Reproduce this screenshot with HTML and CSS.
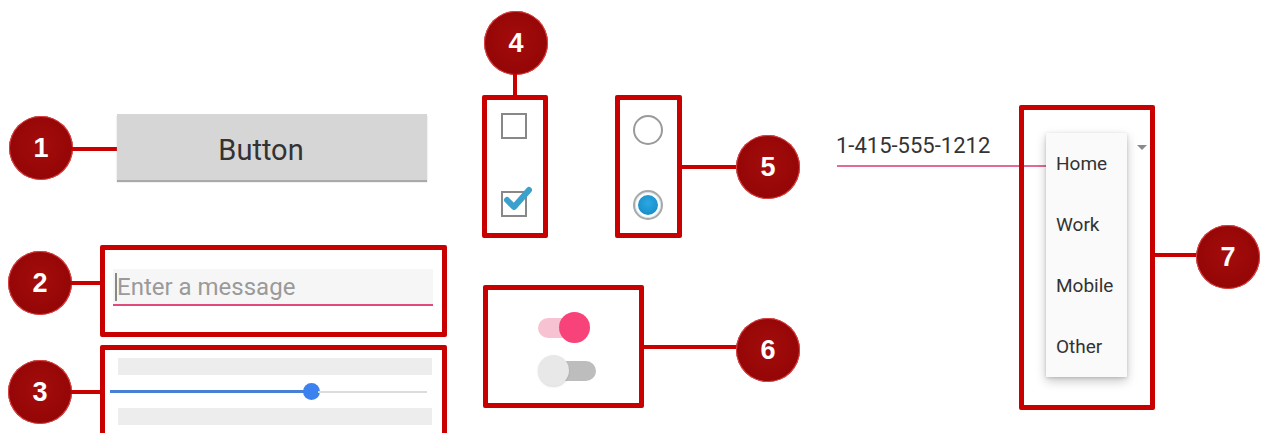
FILE: index.html
```html
<!DOCTYPE html>
<html>
<head>
<meta charset="utf-8">
<link rel="stylesheet" href="styles.css">
</head>
<body>
<div class="canvas">
  <!-- 1 button -->
  <div class="badge b1">1</div>
  <div class="hline l1"></div>
  <div class="btn">Button</div>

  <!-- 2 text field -->
  <div class="badge b2">2</div>
  <div class="hline l2"></div>
  <div class="frame f2">
    <div class="textfield"><span class="caret"></span><span class="hint">Enter a message</span></div>
  </div>

  <!-- 3 slider -->
  <div class="badge b3">3</div>
  <div class="hline l3"></div>
  <div class="frame f3">
    <div class="band"></div>
    <div class="slider">
      <div class="track-on" style="width:60.5%"></div>
      <div class="thumb"></div>
      <div class="track-off"></div>
    </div>
    <div class="band"></div>
  </div>

  <!-- 4 checkboxes -->
  <div class="badge b4">4</div>
  <div class="vline l4"></div>
  <div class="frame f4 stack">
    <div class="cbox"></div>
    <div class="cbox checked">
      <svg viewBox="0 0 30 30" width="30" height="30"><path d="M5 16 L12 23 L27 6" fill="none" stroke="#3aa0cc" stroke-width="6" stroke-linecap="round" stroke-linejoin="round"/></svg>
    </div>
  </div>

  <!-- 5 radios -->
  <div class="frame f5 stack">
    <div class="radio"></div>
    <div class="radio on"><span class="dot"></span></div>
  </div>
  <div class="hline l5"></div>
  <div class="badge b5">5</div>

  <!-- 6 switches -->
  <div class="frame f6">
    <div class="switches">
      <div class="sw sw-on"><span class="sw-track"></span><span class="sw-thumb"></span></div>
      <div class="sw sw-off"><span class="sw-track"></span><span class="sw-thumb"></span></div>
    </div>
  </div>
  <div class="hline l6"></div>
  <div class="badge b6">6</div>

  <!-- 7 spinner -->
  <div class="phone">1-415-555-1212</div>
  <div class="phone-line"></div>
  <div class="arrow"></div>
  <div class="popup">
    <div class="item">Home</div>
    <div class="item">Work</div>
    <div class="item">Mobile</div>
    <div class="item">Other</div>
  </div>
  <div class="frame f7"></div>
  <div class="hline l7"></div>
  <div class="badge b7">7</div>
</div>
</body>
</html>
```

FILE: styles.css
```css
html, body { margin: 0; padding: 0; background: #fff; }
.canvas { position: relative; width: 1263px; height: 433px; overflow: hidden; font-family: Roboto, "Liberation Sans", sans-serif; }

.badge {
  position: absolute; width: 64px; height: 64px; border-radius: 50%;
  background: radial-gradient(circle at 50% 45%, #a30c0c 0%, #950606 70%, #b01010 100%);
  box-shadow: 0 0 0 1px #d44 inset;
  color: #fff; font-family: "Liberation Sans", Arial, sans-serif; font-weight: bold; font-size: 27px;
  display: flex; align-items: center; justify-content: center; box-sizing: border-box;
}
.b1 { left: 9px; top: 116px; }
.b2 { left: 8px; top: 251px; }
.b3 { left: 8px; top: 360px; }
.b4 { left: 484px; top: 11px; }
.b5 { left: 736px; top: 135px; }
.b6 { left: 736px; top: 318px; }
.b7 { left: 1196px; top: 225px; }

.hline { position: absolute; height: 4px; background: #c80000; }
.vline { position: absolute; width: 4px; background: #c80000; }
.l1 { left: 72px; width: 46px; top: 147px; }
.l2 { left: 71px; width: 31px; top: 281px; }
.l3 { left: 71px; width: 31px; top: 390px; }
.l4 { left: 513px; top: 74px; height: 24px; }
.l5 { left: 680px; width: 58px; top: 165px; }
.l6 { left: 642px; width: 96px; top: 345px; }
.l7 { left: 1153px; width: 45px; top: 253px; }

.frame { position: absolute; border: 5px solid #c80000; border-radius: 2px; box-sizing: border-box; }

.btn {
  position: absolute; left: 117px; top: 114px; width: 310px; height: 66px;
  background: #d6d6d6; box-shadow: 0 2px 1px #a9a9a9;
  display: flex; align-items: center; justify-content: center; padding: 5px 22px 0 0; box-sizing: border-box;
  font-size: 29px; color: #333;
}

.f2 { left: 100px; top: 245px; width: 347px; height: 92px; padding: 19px 9px 0 8px; }
.textfield {
  height: 35px; background: #f6f6f6; border-bottom: 2px solid #e24a7c;
  display: flex; align-items: center; padding-left: 2px; gap: 0;
}
.caret { width: 2px; height: 28px; background: #888; }
.hint { font-size: 24px; color: #9a9a9a; }

.f3 { left: 100px; top: 345px; width: 347px; height: 110px; padding: 8px 10px 0 5px; display: flex; flex-direction: column; }
.band { height: 17px; background: #ededed; margin-left: 8px; }
.slider { height: 33px; display: flex; align-items: center; }
.track-on { height: 3px; background: #4a7fd6; }
.thumb { width: 17px; height: 17px; border-radius: 50%; background: #3b82f0; margin: 0 -2px; flex: none; }
.track-off { flex: 1; height: 2px; background: #dcdcdc; margin-right: 5px; }

.stack { display: flex; flex-direction: column; align-items: center; justify-content: space-between; }
.f4 { left: 482px; top: 95px; width: 66px; height: 143px; padding: 13px 0 16px; }
.cbox { width: 26px; height: 26px; border: 2px solid #888; box-sizing: border-box; position: relative; margin-right: 2px; }
.cbox svg { position: absolute; left: -1px; top: -9px; }

.f5 { left: 615px; top: 95px; width: 67px; height: 143px; padding: 15px 0 13px; }
.radio { width: 30px; height: 30px; border-radius: 50%; border: 2px solid #9a9a9a; box-sizing: border-box; display: flex; align-items: center; justify-content: center; margin-right: 2px; }
.radio.on { border-color: #a8a8a8; box-shadow: 0 0 0 1px #d6e8f0 inset; }
.dot { width: 20px; height: 20px; border-radius: 50%; background: radial-gradient(circle at 50% 40%, #2aa8e2, #1386c4); }

.f6 { left: 483px; top: 285px; width: 161px; height: 123px; display: flex; align-items: center; justify-content: center; }
.switches { display: flex; flex-direction: column; gap: 12px; margin-left: 6px; margin-top: 4px; }
.sw { position: relative; width: 58px; height: 31px; }
.sw-track { position: absolute; top: 6px; height: 20px; border-radius: 10px; }
.sw-thumb { position: absolute; top: 0; width: 31px; height: 31px; border-radius: 50%; }
.sw-on .sw-track { left: 0; width: 44px; background: #f7c3d3; filter: blur(0.5px); }
.sw-on .sw-thumb { left: 21px; background: #f8437a; filter: blur(0.7px); }
.sw-off .sw-track { left: 14px; width: 44px; background: #bdbdbd; filter: blur(0.5px); }
.sw-off .sw-thumb { left: 0; background: #e8e8e8; box-shadow: 0 1px 2px rgba(0,0,0,0.15); }

.phone { position: absolute; left: 836px; top: 133px; font-size: 22px; color: #333; }
.phone-line { position: absolute; left: 837px; top: 165px; width: 210px; height: 2px; background: #e36a90; }
.arrow { position: absolute; left: 1137px; top: 145px; width: 0; height: 0; border-left: 5px solid transparent; border-right: 5px solid transparent; border-top: 5px solid #8a8a8a; }
.popup {
  position: absolute; left: 1046px; top: 133px; width: 81px; height: 244px;
  background: #fafafa; box-shadow: 0 4px 10px rgba(0,0,0,0.22), 0 1px 3px rgba(0,0,0,0.15);
  display: flex; flex-direction: column; padding-top: 17px; box-sizing: border-box;
}
.item { flex: none; height: 61px; padding-left: 10px; font-size: 19px; color: #333; line-height: 28px; }
.f7 { left: 1019px; top: 105px; width: 136px; height: 305px; }
```
